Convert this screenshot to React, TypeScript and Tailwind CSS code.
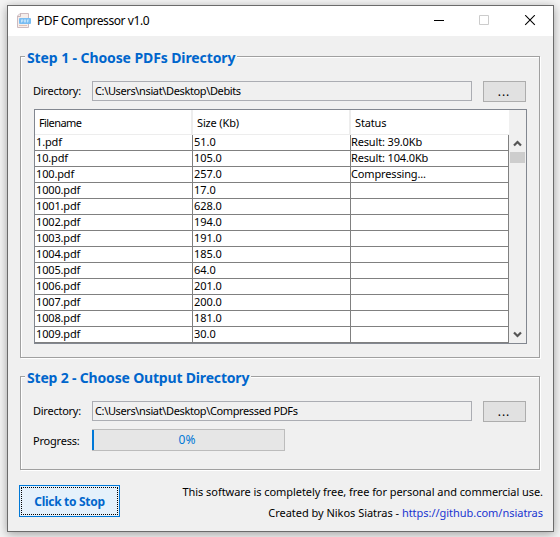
import React from "react";

const ui = "font-['Noto_Sans','Open_Sans',sans-serif]";

const rows: [string, string, string][] = [
  ["1.pdf", "51.0", "Result: 39.0Kb"],
  ["10.pdf", "105.0", "Result: 104.0Kb"],
  ["100.pdf", "257.0", "Compressing..."],
  ["1000.pdf", "17.0", ""],
  ["1001.pdf", "628.0", ""],
  ["1002.pdf", "194.0", ""],
  ["1003.pdf", "191.0", ""],
  ["1004.pdf", "185.0", ""],
  ["1005.pdf", "64.0", ""],
  ["1006.pdf", "201.0", ""],
  ["1007.pdf", "200.0", ""],
  ["1008.pdf", "181.0", ""],
  ["1009.pdf", "30.0", ""],
];

function AppIcon() {
  return (
    <svg width="16" height="16" viewBox="0 0 16 16" fill="none">
      <path d="M4 .5h8.5v14h-11V3z" fill="#f6eeeb" stroke="#cdbbc0" />
      <path d="M1.5 3.5h3v-3" stroke="#c9b5b8" />
      <path d="M3 12.5h8" stroke="#e0c3b6" />
      <rect x="3" y="5" width="12" height="6" rx="1" fill="#79bdf2" />
      <path d="M5.5 9.5V6.8h1.3v1.4H5.5M8.4 6.8v2.3h1.2V6.8zM11.5 9.5V6.8h1.3M11.5 8h1.3" stroke="#d8efff" strokeWidth=".7" />
    </svg>
  );
}

function TitleBar() {
  return (
    <div className="flex h-[30px] shrink-0 items-center bg-white pl-2">
      <AppIcon />
      <span className="ml-[5px] text-[12px] leading-[16px] tracking-[-0.42px]">PDF Compressor v1.0</span>
      <svg className="mr-4 ml-auto" width="104" height="12" viewBox="0 0 104 12" fill="none">
        <path d="M1 5.5h10" stroke="#000" />
        <path d="M46.5 .5h9v9h-9z" stroke="#ccc" />
        <path d="M92.2 .2l9.6 9.6M101.8 .2l-9.6 9.6" stroke="#000" strokeWidth="1.1" />
      </svg>
    </div>
  );
}

function Group({ title, size, tracking, children }: { title: string; size: string; tracking: string; children: React.ReactNode }) {
  return (
    <fieldset className={"relative ml-3 w-[520px] shrink-0 border border-[#a0a0a0] shadow-[1px_1px_0_#fff,inset_1px_1px_0_#fff] " + size}>
      <div className={"absolute -top-[8px] left-[4px] h-[18px] bg-[#f0f0f0] px-[2px] text-[14px] leading-[18px] font-bold whitespace-nowrap text-[#0066cc] " + tracking}>
        {title}
      </div>
      {children}
    </fieldset>
  );
}

function DirectoryRow({ path }: { path: string }) {
  return (
    <div className="flex h-[21px] items-start pl-[12px]">
      <span className="w-[59px] text-[11px] leading-[20px] tracking-[-0.25px]">Directory:</span>
      <div className="h-[20px] w-[380px] border border-[#abadb3] pl-[2px] text-[11px] leading-[18px] tracking-[-0.37px]">{path}</div>
      <button className="ml-[11px] h-[21px] w-[43px] border border-[#adadad] bg-[#e1e1e1] pr-px text-[12px] leading-[17px] tracking-[1px]">...</button>
    </div>
  );
}

function FileTable() {
  return (
    <div className="mt-[7px] ml-[13px] flex h-[235px] w-[493px] border border-[#828790] bg-white text-[11px] tracking-[-0.15px]">
      <div className="w-[474px] shrink-0">
        <div className="flex h-[25px] border-b border-[#ededed] leading-[26px]">
          <div className="w-[158px] border-r-2 border-[#ededed] pl-[4px] tracking-[-0.6px]">Filename</div>
          <div className="w-[158px] border-r-2 border-[#ededed] pl-[4px]">Size (Kb)</div>
          <div className="w-[158px] pl-[4px]">Status</div>
        </div>
        {rows.map(([name, size, status]) => (
          <div key={name} className="flex h-[16px] leading-[13px]">
            <div className="w-[158px] border-r border-b border-[#808080] pl-[1px]">{name}</div>
            <div className="w-[158px] border-r border-b border-[#808080] pl-[1px] tracking-[-0.05px]">{size}</div>
            <div className="w-[158px] border-r border-b border-[#808080] tracking-[-0.15px]">{status}</div>
          </div>
        ))}
      </div>
      <div className="flex w-[17px] flex-col items-center bg-[#f0f0f0]">
        <svg className="mt-[29px] shrink-0" width="9" height="8" viewBox="0 0 9 8" fill="none">
          <path d="M1 6.5L4.5 3L8 6.5" stroke="#555" strokeWidth="2.2" />
        </svg>
        <div className="mt-[5px] h-[11px] w-[15px] shrink-0 bg-[#cdcdcd]" />
        <svg className="mt-auto mb-[4px] shrink-0" width="9" height="8" viewBox="0 0 9 8" fill="none">
          <path d="M1 1.5L4.5 5L8 1.5" stroke="#555" strokeWidth="2.2" />
        </svg>
      </div>
    </div>
  );
}

export default function App() {
  return (
    <div className={"h-[537px] w-[560px] overflow-hidden bg-[#f4f4f4] pt-[5px] pl-[7px] text-black " + ui}>
      <div className="flex h-[527px] w-[547px] flex-col border border-[#6b6b6b] bg-[#f0f0f0] shadow-[0_2px_9px_rgba(0,0,0,0.35)]">
        <TitleBar />
        <Group title="Step 1 - Choose PDFs Directory" tracking="tracking-[-0.1px]" size="mt-[20px] h-[302px] pt-[24px]">
          <DirectoryRow path="C:\Users\nsiat\Desktop\Debits" />
          <FileTable />
        </Group>
        <Group title="Step 2 - Choose Output Directory" tracking="tracking-[-0.18px]" size="mt-[18px] h-[94px] pt-[24px]">
          <DirectoryRow path="C:\Users\nsiat\Desktop\Compressed PDFs" />
          <div className="mt-[7px] flex pl-[12px]">
            <span className="w-[59px] text-[11px] leading-[24px] tracking-[-0.2px]">Progress:</span>
            <div className="flex h-[22px] w-[193px] border border-l-0 border-[#bcbcbc] bg-[#e6e6e6] text-[12px] leading-[19px] text-[#0078d7]">
              <div className="w-[2px] bg-[#0078d7]" />
              <div className="flex-1 pr-[4px] text-center">0%</div>
            </div>
          </div>
        </Group>
        <div className="mt-[15px] flex pr-[10px] pl-[11px]">
          <button className="h-[32px] w-[101px] border border-[#0078d7] bg-[#e5f1fb] p-px">
            <div className="h-[28px] border border-dotted border-black text-[12px] leading-[27px] font-bold tracking-[-0.3px] text-[#0066cc]">Click to Stop</div>
          </button>
          <div className="-mt-[4px] ml-auto text-right text-[11px] leading-[21px] tracking-[-0.06px]">
            <div>This software is completely free, free for personal and commercial use.</div>
            <div className="tracking-[-0.03px]">
              Created by Nikos Siatras - <span className="text-[#1a35d0]">https://github.com/nsiatras</span>
            </div>
          </div>
        </div>
      </div>
    </div>
  );
}
